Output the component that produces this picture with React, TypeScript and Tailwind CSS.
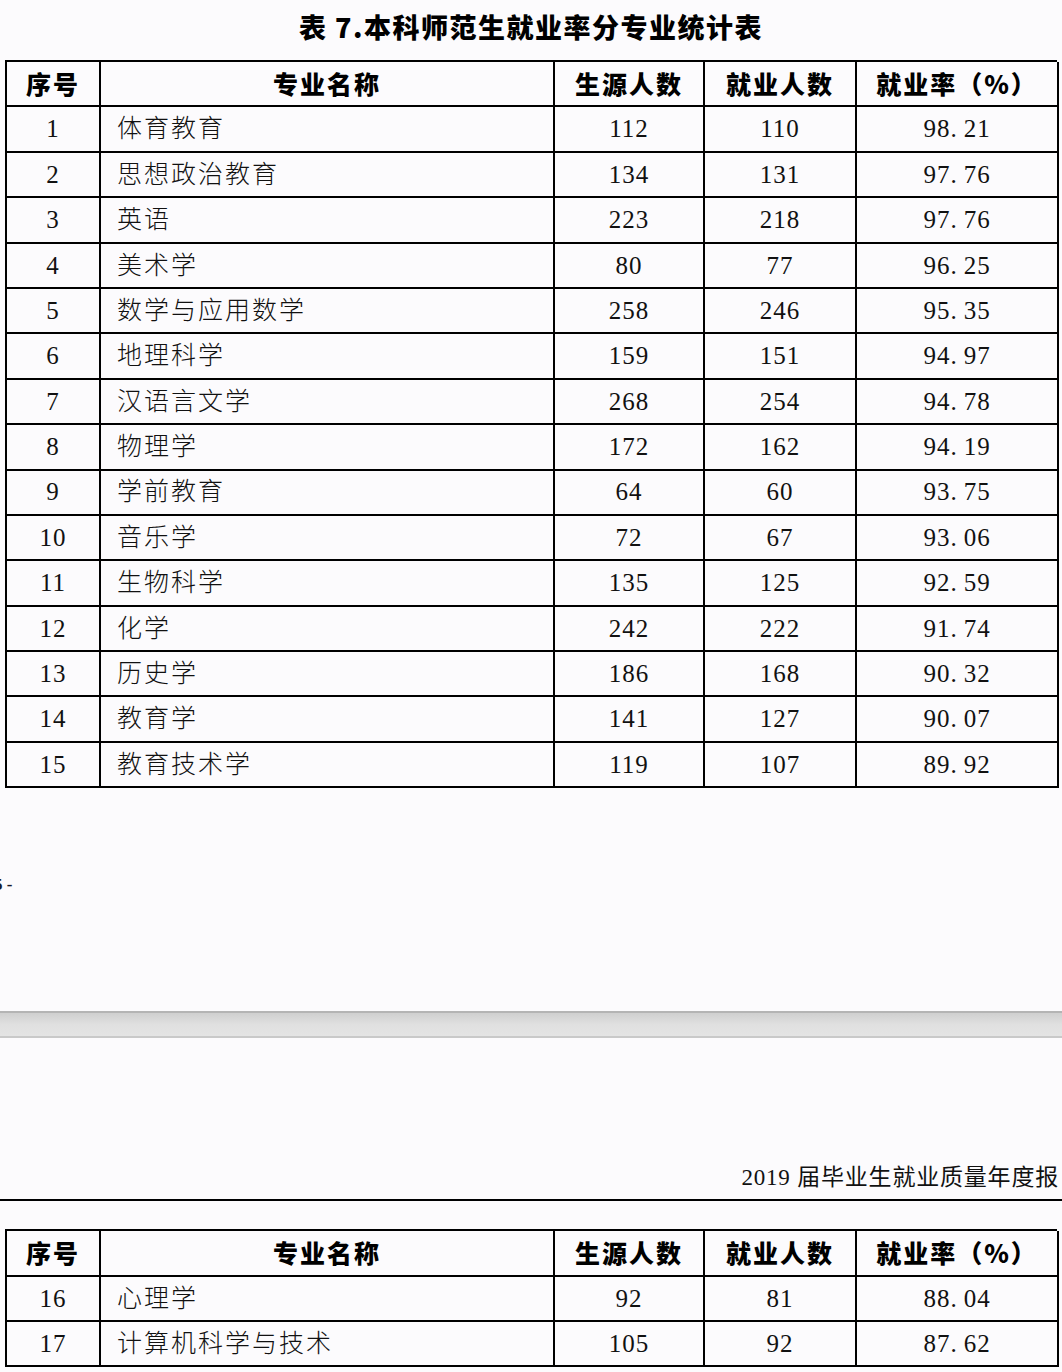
import React from "react"

type Row = { no: number; name: string; src: number; emp: number; rate: string }

const page1: Row[] = [
  { no: 1, name: "体育教育", src: 112, emp: 110, rate: "98.21" },
  { no: 2, name: "思想政治教育", src: 134, emp: 131, rate: "97.76" },
  { no: 3, name: "英语", src: 223, emp: 218, rate: "97.76" },
  { no: 4, name: "美术学", src: 80, emp: 77, rate: "96.25" },
  { no: 5, name: "数学与应用数学", src: 258, emp: 246, rate: "95.35" },
  { no: 6, name: "地理科学", src: 159, emp: 151, rate: "94.97" },
  { no: 7, name: "汉语言文学", src: 268, emp: 254, rate: "94.78" },
  { no: 8, name: "物理学", src: 172, emp: 162, rate: "94.19" },
  { no: 9, name: "学前教育", src: 64, emp: 60, rate: "93.75" },
  { no: 10, name: "音乐学", src: 72, emp: 67, rate: "93.06" },
  { no: 11, name: "生物科学", src: 135, emp: 125, rate: "92.59" },
  { no: 12, name: "化学", src: 242, emp: 222, rate: "91.74" },
  { no: 13, name: "历史学", src: 186, emp: 168, rate: "90.32" },
  { no: 14, name: "教育学", src: 141, emp: 127, rate: "90.07" },
  { no: 15, name: "教育技术学", src: 119, emp: 107, rate: "89.92" },
]

const page2: Row[] = [
  { no: 16, name: "心理学", src: 92, emp: 81, rate: "88.04" },
  { no: 17, name: "计算机科学与技术", src: 105, emp: 92, rate: "87.62" },
]

const serif = "font-['Liberation_Serif','Noto_Sans_CJK_SC',serif]"
const cols = "grid grid-cols-[94px_454px_150px_152px_202px]"
const cell = "h-[45.4px] border-r-2 border-b-2 border-black flex items-center"

function Rate({ value }: { value: string }) {
  const [a, b] = value.split(".")
  return (
    <span>
      {a}.<span className="ml-[6px]">{b}</span>
    </span>
  )
}

function StatTable({ rows }: { rows: Row[] }) {
  const head = "font-['Noto_Sans_CJK_SC',sans-serif] font-black text-[25px] tracking-[2px] justify-center"
  return (
    <div className="ml-[5px] w-[1052px] border-l-2 border-t-2 border-black">
      <div className={cols}>
        <div className={`${cell} ${head}`}>序号</div>
        <div className={`${cell} ${head}`}>专业名称</div>
        <div className={`${cell} ${head}`}>生源人数</div>
        <div className={`${cell} ${head}`}>就业人数</div>
        <div className={`${cell} ${head}`}>就业率（%）</div>
      </div>
      {rows.map((r) => (
        <div key={r.no} className={`${cols} ${serif} text-[25px] text-[#111]`}>
          <div className={`${cell} justify-center tracking-[1px]`}>{r.no}</div>
          <div className={`${cell} pl-[16px] font-light tracking-[2px]`}>{r.name}</div>
          <div className={`${cell} justify-center tracking-[1px]`}>{r.src}</div>
          <div className={`${cell} justify-center tracking-[1px]`}>{r.emp}</div>
          <div className={`${cell} justify-center tracking-[1px]`}>
            <Rate value={r.rate} />
          </div>
        </div>
      ))}
    </div>
  )
}

export default function App() {
  return (
    <div className="w-[1062px] h-[1372px] overflow-hidden bg-[#fcfbfd] text-black">
      {/* page 1 */}
      <div className="h-[60px] flex items-center justify-center pb-[6px]">
        <h1 className="font-['Noto_Sans_CJK_SC',sans-serif] font-black text-[27px] tracking-[1.5px]">
          表 7.本科师范生就业率分专业统计表
        </h1>
      </div>
      <StatTable rows={page1} />
      <div className="h-[223px] pt-[84px]">
        <div className={`${serif} text-[17px] font-bold text-[#1a1a2a] -ml-[6px]`}>5 -</div>
      </div>

      {/* page gap */}
      <div className="h-[27px] border-t-2 border-b-2 border-t-[#b4b4b4] border-b-[#c9c9c9] bg-gradient-to-b from-[#cfcfcf] via-[#e0e0e0] to-[#e4e4e4]" />

      {/* page 2 */}
      <div className="h-[163px] flex items-end justify-end border-b-2 border-black pb-[4px] pr-[3px]">
        <span className={`${serif} text-[23px] tracking-[0.8px] whitespace-nowrap text-[#111]`}>2019 届毕业生就业质量年度报</span>
      </div>
      <div className="h-[28px]" />
      <StatTable rows={page2} />
    </div>
  )
}
